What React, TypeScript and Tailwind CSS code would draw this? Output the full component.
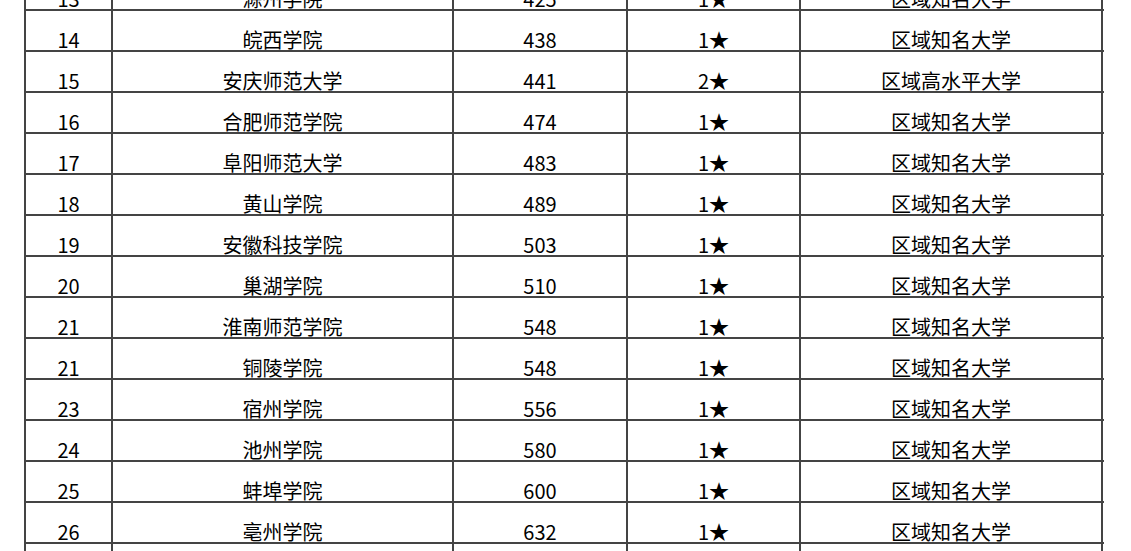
const rows: [string, string, string, string, string][] = [
  ['13', '滁州学院', '425', '1★', '区域知名大学'],
  ['14', '皖西学院', '438', '1★', '区域知名大学'],
  ['15', '安庆师范大学', '441', '2★', '区域高水平大学'],
  ['16', '合肥师范学院', '474', '1★', '区域知名大学'],
  ['17', '阜阳师范大学', '483', '1★', '区域知名大学'],
  ['18', '黄山学院', '489', '1★', '区域知名大学'],
  ['19', '安徽科技学院', '503', '1★', '区域知名大学'],
  ['20', '巢湖学院', '510', '1★', '区域知名大学'],
  ['21', '淮南师范学院', '548', '1★', '区域知名大学'],
  ['21', '铜陵学院', '548', '1★', '区域知名大学'],
  ['23', '宿州学院', '556', '1★', '区域知名大学'],
  ['24', '池州学院', '580', '1★', '区域知名大学'],
  ['25', '蚌埠学院', '600', '1★', '区域知名大学'],
  ['26', '亳州学院', '632', '1★', '区域知名大学'],
  ['27', '安徽新华学院', '655', '1★', '区域知名大学'],
];

export default function App() {
  return (
    <div className="h-[551px] overflow-hidden bg-white">
      <div
        className="-mt-[30px] ml-[24px] w-[1080px] text-[20px] text-black"
        style={{ fontFamily: '"Noto Sans CJK SC", "Noto Sans", sans-serif' }}
      >
        {rows.map((r, i) => (
          <div
            key={i}
            className="grid h-[41px] grid-cols-[89px_341px_174px_173px_302px] border-b-2 border-[#444]"
          >
            <div className="flex items-end justify-center border-x-2 border-[#444] leading-[20px]">{r[0]}</div>
            <div className="flex items-end justify-center border-r-2 border-[#444] leading-[20px]">{r[1]}</div>
            <div className="flex items-end justify-center border-r-2 border-[#444] leading-[20px]">{r[2]}</div>
            <div className="flex items-end justify-center border-r-2 border-[#444] leading-[20px]">{r[3]}</div>
            <div className="flex items-end justify-center border-r-2 border-[#444] leading-[20px]">{r[4]}</div>
          </div>
        ))}
      </div>
    </div>
  );
}
